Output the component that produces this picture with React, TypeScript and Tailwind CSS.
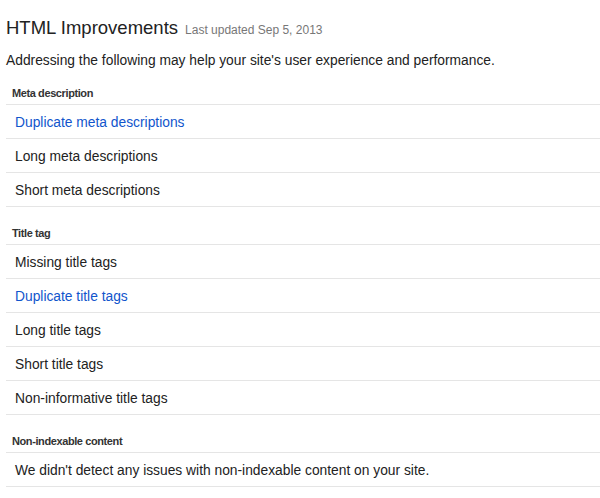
import React from 'react';

type Row = { label: string; link?: boolean };

const sections: { title: string; rows: Row[] }[] = [
  {
    title: 'Meta description',
    rows: [
      { label: 'Duplicate meta descriptions', link: true },
      { label: 'Long meta descriptions' },
      { label: 'Short meta descriptions' },
    ],
  },
  {
    title: 'Title tag',
    rows: [
      { label: 'Missing title tags' },
      { label: 'Duplicate title tags', link: true },
      { label: 'Long title tags' },
      { label: 'Short title tags' },
      { label: 'Non-informative title tags' },
    ],
  },
  {
    title: 'Non-indexable content',
    rows: [{ label: "We didn't detect any issues with non-indexable content on your site." }],
  },
];

export default function App() {
  return (
    <div className="w-[600px] h-[498px] bg-white pl-[6px] font-['Liberation_Sans',Arial,sans-serif] text-[#222] overflow-hidden">
      <div className="pt-[16px] flex items-baseline gap-[7px]">
        <h1 className="text-[18.5px] leading-[24px] text-[#222]">HTML Improvements</h1>
        <span className="text-[12px] text-[#777]">Last updated Sep 5, 2013</span>
      </div>
      <p className="mt-[13px] text-[13.8px] leading-[16px]">
        Addressing the following may help your site's user experience and performance.
      </p>
      {sections.map((s, i) => (
        <div key={s.title} className={i === 0 ? 'mt-[15px]' : 'mt-[17px]'}>
          <div className="pl-[6px] pb-[3px] pt-[1px] text-[11px] tracking-[-0.4px] leading-[16px] font-bold text-[#333] border-b border-[#e5e5e5]">
            {s.title}
          </div>
          {s.rows.map((r) => (
            <div
              key={r.label}
              className="h-[34px] flex items-center pt-[3px] pl-[9px] text-[13.8px] border-b border-[#e5e5e5]"
            >
              <span className={r.link ? 'text-[#1155cc]' : 'text-[#222]'}>{r.label}</span>
            </div>
          ))}
        </div>
      ))}
    </div>
  );
}
